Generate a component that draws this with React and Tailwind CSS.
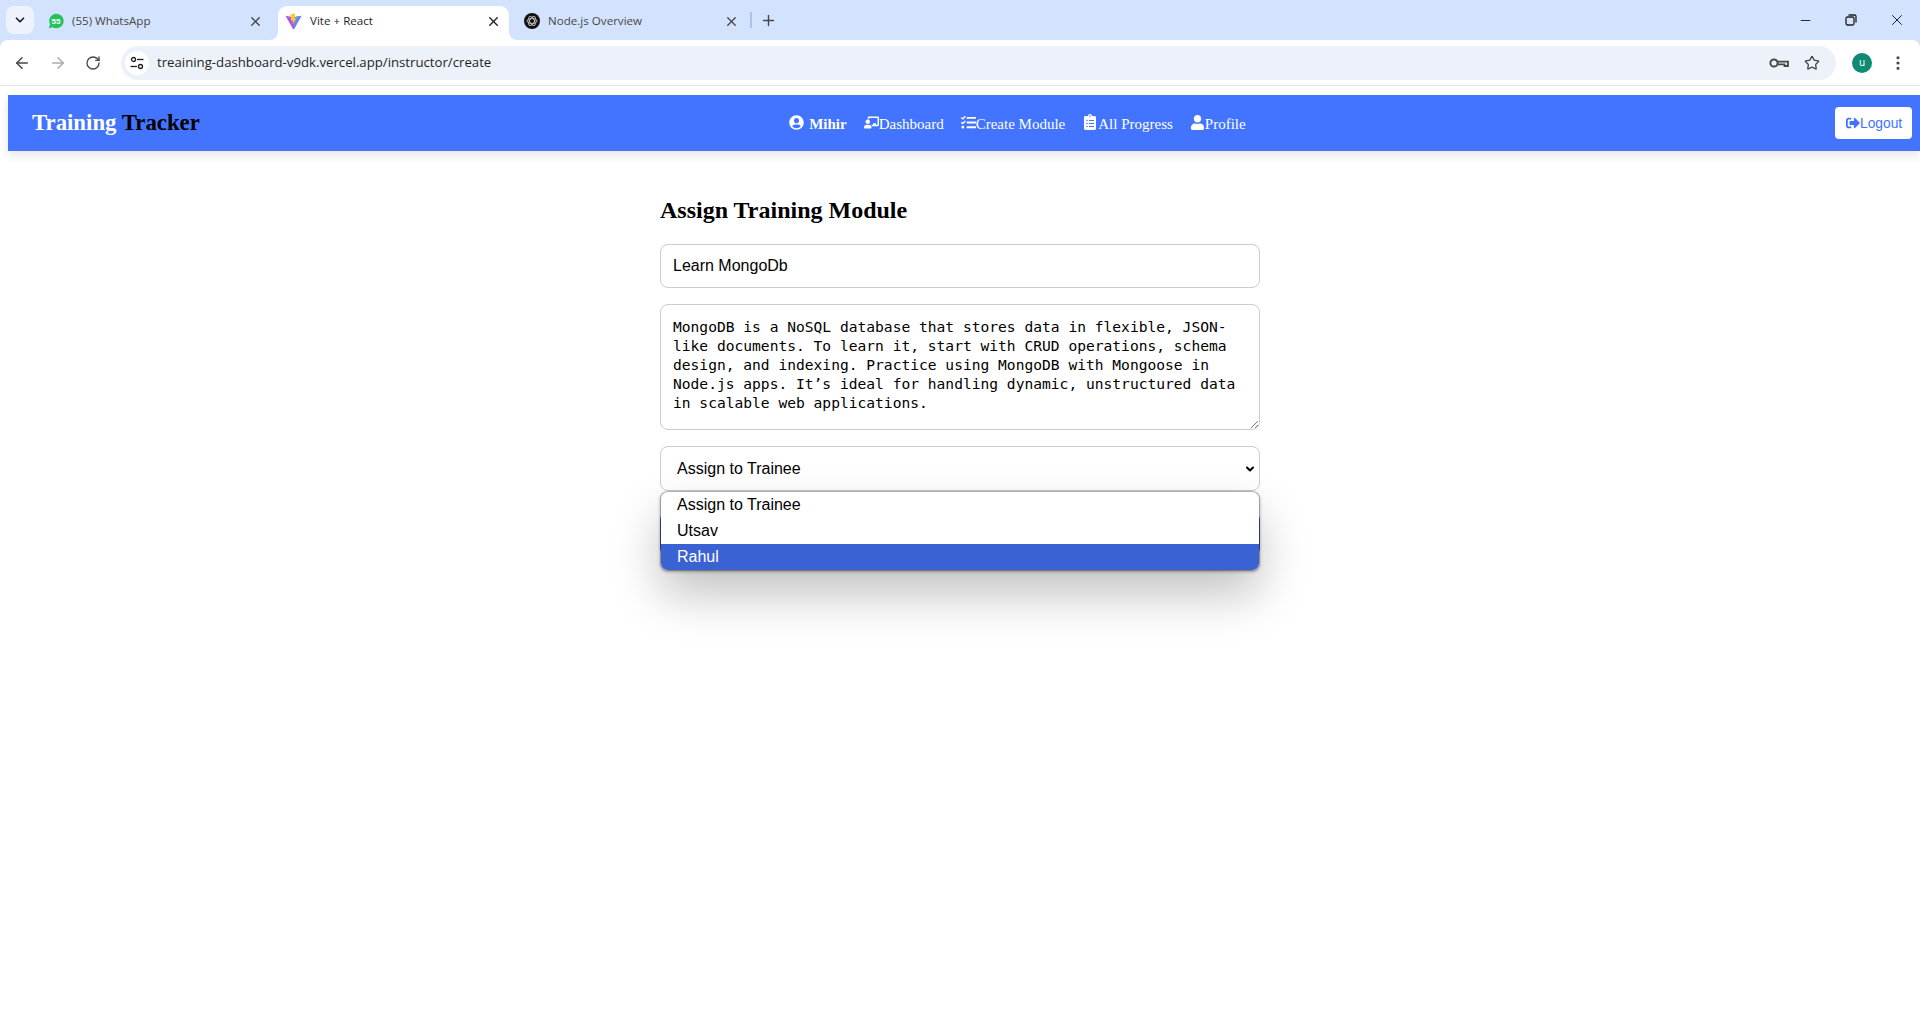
import React from "react";
import { ArrowLeft, ArrowRight, RotateCw, X, Plus, ChevronDown, Star, EllipsisVertical, Minus } from "lucide-react";
import { FaUserCircle, FaChalkboardTeacher, FaTasks, FaClipboardList, FaUser, FaSignOutAlt } from "react-icons/fa";

const sans = "font-['Liberation_Sans',Arial,sans-serif]";
const serif = "font-['Liberation_Serif','Times_New_Roman',serif]";
const ui = "font-['Open_Sans','Noto_Sans',sans-serif]";

const ViteLogo = () => (
  <svg width="17" height="17" viewBox="0 0 32 32" className="-ml-px">
    <path d="M1 5 L16 8 L31 5 L17 30 Q16 31 15 30 Z" fill="#a855f7" />
    <path d="M31 5 L17 30 L16 8 Z" fill="#5f8cf7" />
    <path d="M19 1 L10 3 L12 15 L15 14 L14 22 L22 9 L18 10 Z" fill="#fdc91f" />
  </svg>
);

const WhatsappLogo = () => (
  <svg width="16" height="16" viewBox="0 0 16 16">
    <path d="M0.8 15.2 L2 11.2 A7.2 7.2 0 1 1 4.8 14.2 Z" fill="#22c35a" />
    <text x="8" y="10.6" textAnchor="middle" fontSize="8" fontWeight="700" fill="#fff" fontFamily="Liberation Sans, sans-serif">55</text>
  </svg>
);

const OpenAiLogo = () => (
  <svg width="16" height="16" viewBox="0 0 16 16">
    <circle cx="8" cy="8" r="8" fill="#111" />
    <g fill="none" stroke="#c4c4c4" strokeWidth="0.9">
      <ellipse cx="8" cy="8" rx="5" ry="2.4" />
      <ellipse cx="8" cy="8" rx="5" ry="2.4" transform="rotate(60 8 8)" />
      <ellipse cx="8" cy="8" rx="5" ry="2.4" transform="rotate(120 8 8)" />
    </g>
  </svg>
);

const TuneIcon = () => (
  <svg width="14" height="14" viewBox="0 0 14 14" fill="none" stroke="#1f1f1f" strokeWidth="1.3">
    <circle cx="3.5" cy="3.5" r="2" />
    <path d="M7 3.5 H13.5" />
    <path d="M0.5 10.5 H7" />
    <circle cx="10.5" cy="10.5" r="2" />
  </svg>
);

const KeyIcon = () => (
  <svg width="20" height="12" viewBox="0 0 20 12" fill="none" stroke="#474747">
    <circle cx="5" cy="6" r="3.6" strokeWidth="2" />
    <path d="M8.6 4.6 H19 V9 H15.5 V7.4 H8.6" strokeWidth="1.8" />
  </svg>
);

const Tab = ({ icon, title, active }) => (
  <div className={`relative h-[34px] w-[231px] flex items-center pl-2 pr-2 pb-[4px] rounded-t-[9px] ${active ? "bg-white text-[#1f1f1f]" : "text-[#474747]"}`}>
    {active && (
      <>
        <div className="absolute -left-2 bottom-0 w-2 h-2 bg-white">
          <div className="w-2 h-2 bg-[#d3e3fd] rounded-br-lg" />
        </div>
        <div className="absolute -right-2 bottom-0 w-2 h-2 bg-white">
          <div className="w-2 h-2 bg-[#d3e3fd] rounded-bl-lg" />
        </div>
      </>
    )}
    {icon}
    <span className={`ml-2 flex-1 text-[11.6px] ${ui}`}>{title}</span>
    <X size={15} strokeWidth={2.2} className={active ? "text-[#1f1f1f]" : "text-[#474747]"} />
  </div>
);

const TabStrip = () => (
  <div className="h-10 flex items-end pl-[6px]">
    <div className="h-7 w-7 mb-[6px] rounded-lg bg-[#edf2fc] flex items-center justify-center">
      <ChevronDown size={14} strokeWidth={3} className="text-[#1f1f1f]" />
    </div>
    <div className="ml-[6px] flex gap-[7px]">
      <Tab icon={<WhatsappLogo />} title="(55) WhatsApp" />
      <Tab icon={<ViteLogo />} title="Vite + React" active />
      <Tab icon={<OpenAiLogo />} title="Node.js Overview" />
    </div>
    <div className="w-[2px] h-4 mb-3 ml-[3px] bg-[#a9c3f0]" />
    <Plus size={17} strokeWidth={2} className="ml-2 mb-[11px] text-[#474747]" />
    <div className="ml-auto h-10 self-start flex items-center text-[#1f1f1f]">
      <div className="w-[46px] flex justify-center"><Minus size={15} strokeWidth={1.5} /></div>
      <div className="w-[46px] flex justify-center">
        <svg width="12" height="12" viewBox="0 0 12 12" fill="none" stroke="#1f1f1f" strokeWidth="1.3">
          <rect x="1" y="3" width="8" height="8" rx="1.5" />
          <path d="M3.5 1h6a1.5 1.5 0 0 1 1.5 1.5v6" />
        </svg>
      </div>
      <div className="w-[46px] flex justify-center"><X size={18} strokeWidth={1.3} /></div>
    </div>
  </div>
);

const AddressBar = () => (
  <div className="h-[46px] bg-white border-b border-[#e3e3e3] flex items-center pl-[13px] rounded-t-lg">
    <ArrowLeft size={18} strokeWidth={2} className="text-[#474747]" />
    <ArrowRight size={18} strokeWidth={2} className="ml-[18px] text-[#ababab]" />
    <RotateCw size={16} strokeWidth={2} className="ml-[18px] text-[#474747]" />
    <div className="ml-5 w-[1715px] h-[34px] rounded-full bg-[#edf2fa] flex items-center pl-1 pr-4">
      <div className="w-6 h-6 rounded-full bg-white flex items-center justify-center">
        <TuneIcon />
      </div>
      <span className={`ml-2 text-[13.2px] text-[#1f1f1f] ${ui} flex-1`}>treaining-dashboard-v9dk.vercel.app/instructor/create</span>
      <KeyIcon />
      <Star size={16} strokeWidth={2} className="ml-[15px] text-[#474747]" />
    </div>
    <div className="ml-4 w-5 h-5 rounded-full bg-[#0f8a73] text-white text-[10px] flex items-center justify-center">u</div>
    <EllipsisVertical size={18} strokeWidth={2.2} className="ml-[17px] text-[#474747]" />
  </div>
);

const NavLink = ({ icon, label, bold }) => (
  <div className={`flex items-center pt-[3px] text-white text-[15px] ${bold ? "font-bold" : ""}`}>
    <span className="-mt-[5px]">{icon}</span>
    {label}
  </div>
);

const Navbar = () => (
  <div className="ml-2 mt-[9px] h-14 bg-[#4274ff] shadow-[0_4px_10px_rgba(0,0,0,0.1)] flex justify-between items-center pl-6 pr-2">
    <div className={`${serif} text-[22.8px] font-bold text-white`}>Training <span className="text-black">Tracker</span></div>
    <div className={`${serif} flex items-center gap-[17px]`}>
      <NavLink bold label={<span className="ml-[5px]">Mihir</span>} icon={<FaUserCircle size={15} />} />
      <NavLink label="Dashboard" icon={<FaChalkboardTeacher size={15} />} />
      <NavLink label="Create Module" icon={<FaTasks size={15} />} />
      <NavLink label="All Progress" icon={<FaClipboardList size={16} />} />
      <NavLink label="Profile" icon={<FaUser size={15} />} />
    </div>
    <button className={`h-8 w-[77px] pl-[11px] pt-[2px] bg-white rounded-[4px] flex items-center text-[13.8px] text-[#4274ff] ${sans}`}>
      <span className="-mt-[3px]"><FaSignOutAlt size={14} /></span>Logout
    </button>
  </div>
);

const AssignForm = () => (
  <div className="relative w-[600px] mx-auto mt-[45px]">
    <h2 className={`${serif} text-2xl font-bold text-black leading-[28px]`}>Assign Training Module</h2>
    <div className={`mt-5 h-11 border border-[#ccc] rounded-lg flex items-center px-3 text-base text-black ${sans}`}>Learn MongoDb</div>
    <div className="relative mt-4 h-[126px] border border-[#ccc] rounded-lg px-3 pt-3 font-['DejaVu_Sans_Mono','Liberation_Mono',monospace] text-[14.6px] leading-[19px] text-black whitespace-nowrap">
      <div>MongoDB is a NoSQL database that stores data in flexible, JSON-</div>
      <div>like documents. To learn it, start with CRUD operations, schema</div>
      <div>design, and indexing. Practice using MongoDB with Mongoose in</div>
      <div>Node.js apps. It’s ideal for handling dynamic, unstructured data</div>
      <div>in scalable web applications.</div>
      <svg className="absolute right-px bottom-px" width="8" height="8" viewBox="0 0 8 8" stroke="#777" strokeWidth="1">
        <path d="M1 8 L8 1 M5 8 L8 5" />
      </svg>
    </div>
    <div className={`mt-4 h-[45px] border border-[#ccc] rounded-lg flex items-center pl-4 pr-[3px] text-base text-black ${sans}`}>
      <span className="flex-1">Assign to Trainee</span>
      <ChevronDown size={12} strokeWidth={4} />
    </div>
    <div className="h-11 mt-[21px] rounded-lg bg-[#3b62d3]" />
    <div className={`absolute left-0 right-0 top-[295px] rounded-lg border border-black/20 bg-white bg-clip-padding overflow-hidden text-base text-black leading-[26px] shadow-[0_1px_3px_rgba(0,0,0,0.3),0_24px_48px_rgba(0,0,0,0.24)] ${sans}`}>
      <div className="pl-4 h-[26px]">Assign to Trainee</div>
      <div className="pl-4 h-[26px]">Utsav</div>
      <div className="pl-4 h-[26px] bg-[#3b62d3] text-white">Rahul</div>
    </div>
  </div>
);

export default function App() {
  return (
    <div className="min-h-[1032px] bg-white overflow-hidden">
      <div className="bg-[#d3e3fd]">
        <TabStrip />
        <AddressBar />
      </div>
      <Navbar />
      <AssignForm />
    </div>
  );
}
